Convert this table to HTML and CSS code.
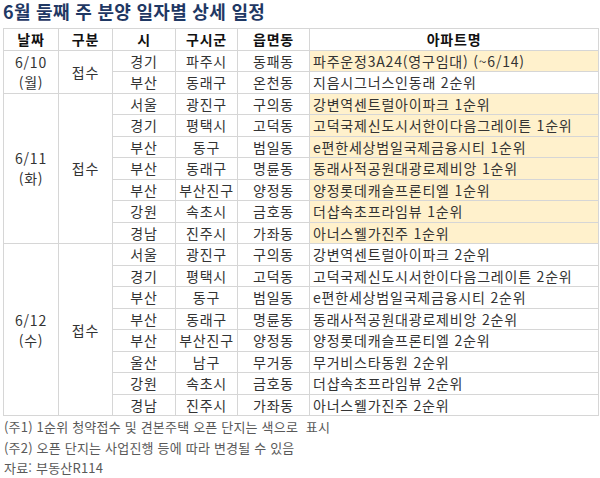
FILE: index.html
```html
<!DOCTYPE html>
<html lang="ko">
<head>
<meta charset="utf-8">
<link rel="stylesheet" href="styles.css">
</head>
<body>
<div class="page">
  <h1 class="title">6월 둘째 주 분양 일자별 상세 일정</h1>
  <table class="sched">
    <colgroup>
      <col class="c-date"><col class="c-type"><col class="c-si"><col class="c-gu"><col class="c-dong"><col class="c-apt">
    </colgroup>
    <thead>
      <tr><th>날짜</th><th>구분</th><th>시</th><th>구시군</th><th>읍면동</th><th>아파트명</th></tr>
    </thead>
    <tbody>
      <tr><td rowspan="2" class="date">6/10<br>(월)</td><td rowspan="2">접수</td><td>경기</td><td>파주시</td><td>동패동</td><td class="apt hl">파주운정3A24(영구임대) (~6/14)</td></tr>
      <tr><td>부산</td><td>동래구</td><td>온천동</td><td class="apt">지음시그너스인동래 2순위</td></tr>

      <tr><td rowspan="7" class="date">6/11<br>(화)</td><td rowspan="7">접수</td><td>서울</td><td>광진구</td><td>구의동</td><td class="apt hl">강변역센트럴아이파크 1순위</td></tr>
      <tr><td>경기</td><td>평택시</td><td>고덕동</td><td class="apt hl">고덕국제신도시서한이다음그레이튼 1순위</td></tr>
      <tr><td>부산</td><td>동구</td><td>범일동</td><td class="apt hl">e편한세상범일국제금융시티 1순위</td></tr>
      <tr><td>부산</td><td>동래구</td><td>명륜동</td><td class="apt hl">동래사적공원대광로제비앙 1순위</td></tr>
      <tr><td>부산</td><td>부산진구</td><td>양정동</td><td class="apt hl">양정롯데캐슬프론티엘 1순위</td></tr>
      <tr><td>강원</td><td>속초시</td><td>금호동</td><td class="apt hl">더샵속초프라임뷰 1순위</td></tr>
      <tr><td>경남</td><td>진주시</td><td>가좌동</td><td class="apt hl">아너스웰가진주 1순위</td></tr>

      <tr><td rowspan="8" class="date">6/12<br>(수)</td><td rowspan="8">접수</td><td>서울</td><td>광진구</td><td>구의동</td><td class="apt">강변역센트럴아이파크 2순위</td></tr>
      <tr><td>경기</td><td>평택시</td><td>고덕동</td><td class="apt">고덕국제신도시서한이다음그레이튼 2순위</td></tr>
      <tr><td>부산</td><td>동구</td><td>범일동</td><td class="apt">e편한세상범일국제금융시티 2순위</td></tr>
      <tr><td>부산</td><td>동래구</td><td>명륜동</td><td class="apt">동래사적공원대광로제비앙 2순위</td></tr>
      <tr><td>부산</td><td>부산진구</td><td>양정동</td><td class="apt">양정롯데캐슬프론티엘 2순위</td></tr>
      <tr><td>울산</td><td>남구</td><td>무거동</td><td class="apt">무거비스타동원 2순위</td></tr>
      <tr><td>강원</td><td>속초시</td><td>금호동</td><td class="apt">더샵속초프라임뷰 2순위</td></tr>
      <tr><td>경남</td><td>진주시</td><td>가좌동</td><td class="apt">아너스웰가진주 2순위</td></tr>
    </tbody>
  </table>
  <div class="notes">
    <p>(주1) 1순위 청약접수 및 견본주택 오픈 단지는 색으로&nbsp; 표시</p>
    <p>(주2) 오픈 단지는 사업진행 등에 따라 변경될 수 있음</p>
    <p>자료: 부동산R114</p>
  </div>
</div>
</body>
</html>
```

FILE: styles.css
```css
html, body {
  margin: 0;
  padding: 0;
  background: #ffffff;
}
body {
  font-family: "Noto Sans CJK KR", "Noto Sans", sans-serif;
  color: #333333;
}
.page {
  padding: 0 1px 0 3px;
}
.title {
  margin: -2px 0 0 0;
  height: 30px;
  font-size: 18px;
  line-height: 26px;
  font-weight: 700;
  color: #1f3864;
  letter-spacing: 0.3px;
  white-space: nowrap;
}
.sched {
  border-collapse: collapse;
  width: 596px;
  table-layout: fixed;
  font-size: 14px;
  letter-spacing: 0.8px;
}
.c-date { width: 55px; }
.c-type { width: 54px; }
.c-si { width: 63px; }
.c-gu { width: 62px; }
.c-dong { width: 72px; }
.c-apt { width: auto; }
.sched th, .sched td {
  border: 1px solid #d6d6d6;
  padding: 0;
  height: 20.5px;
  line-height: 20px;
  text-align: center;
  vertical-align: middle;
  white-space: nowrap;
}
.sched th {
  font-weight: 700;
  color: #111111;
  background: #ffffff;
}
.sched td.apt {
  text-align: left;
  padding-left: 3px;
}
.sched td.hl {
  background: #fff1cc;
}
.notes {
  padding-top: 1px;
  font-size: 13px;
  letter-spacing: 0.2px;
  color: #595959;
}
.notes p {
  margin: 0;
  line-height: 20.5px;
  padding-left: 1px;
  white-space: nowrap;
}
```
